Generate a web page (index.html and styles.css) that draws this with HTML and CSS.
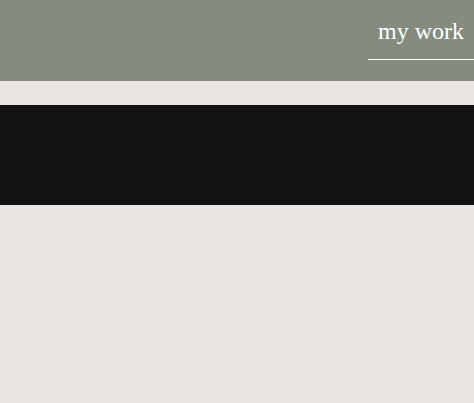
FILE: index.html
```html
<!DOCTYPE html>
<html>
<head>
<meta charset="utf-8">
<link rel="stylesheet" href="styles.css">
</head>
<body>
<header class="site-header">
  <nav class="nav">
    <a class="nav-link" href="#">my work</a>
  </nav>
</header>
<section class="band"></section>
</body>
</html>
```
FILE: styles.css
```css
html, body {
  margin: 0;
  padding: 0;
}
body {
  background: #e9e6e1;
  font-family: "Liberation Serif", "Times New Roman", serif;
  height: 403px;
  overflow: hidden;
}
.site-header {
  background: #838c7f;
  height: 81px;
  display: flex;
  justify-content: flex-end;
  align-items: flex-start;
}
.nav {
  display: flex;
}
.nav-link {
  display: block;
  color: #ffffff;
  text-decoration: none;
  font-size: 24px;
  line-height: 28px;
  padding: 17px 10px 14px 10px;
  border-bottom: 1px solid #ffffff;
}
.band {
  margin-top: 24px;
  height: 100px;
  background: #131313;
}
```
